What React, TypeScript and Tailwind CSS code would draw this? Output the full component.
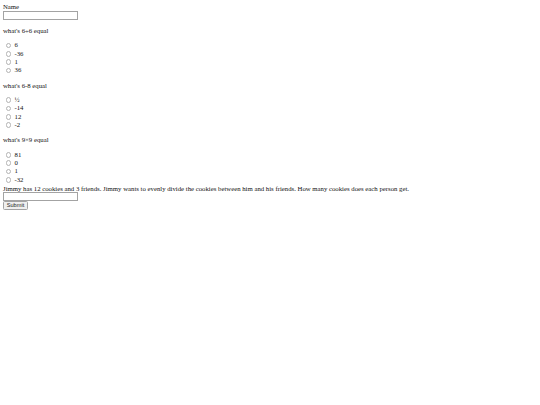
import React from 'react';

const questions = [
  { q: "what's 6÷6 equal", name: 'q1', options: ['6', '-36', '1', '36'] },
  { q: "what's 6-8 equal", name: 'q2', options: ['½', '-14', '12', '-2'] },
  { q: "what's 9×9 equal", name: 'q3', options: ['81', '0', '1', '-32'] },
];

export default function App() {
  return (
    <form className="min-h-[405px] bg-white px-[3px] pt-[2px] font-['Liberation_Serif',serif] text-[6.75px] leading-[8px] text-[#111] antialiased [transform:translateZ(0)]">
      <label htmlFor="name" className="block h-[9px] leading-[9px]">Name</label>
      <input
        id="name"
        type="text"
        className="block h-[9px] w-[75px] border border-[#a3a3a3] bg-white outline-none"
      />

      {questions.map((item) => (
        <div key={item.name}>
          <p className="mt-[6px] h-[9px] leading-[9px]">{item.q}</p>
          <div className="mt-[6.33px]">
            {item.options.map((opt) => (
              <label key={opt} className="flex h-[8.33px] items-center">
                <input
                  type="radio"
                  name={item.name}
                  className="ml-[2.5px] mr-[3.5px] h-[5.5px] w-[5.5px] appearance-none rounded-full border border-[#b3b3b3] bg-white"
                />
                <span className="leading-[8px]">{opt}</span>
              </label>
            ))}
          </div>
        </div>
      ))}

      <p className="h-[8px] leading-[9px]">
        Jimmy has 12 cookies and 3 friends. Jimmy wants to evenly divide the cookies between him and his friends. How many cookies does each person get.
      </p>
      <input
        type="text"
        className="block h-[9px] w-[75px] border border-[#a3a3a3] bg-white outline-none"
      />
      <button
        type="button"
        className="block h-[9px] w-[25px] rounded-[1.5px] border border-[#a3a3a3] bg-[#efefef] font-['Liberation_Sans',sans-serif] text-[5.6px] leading-[6px] text-[#222]"
      >
        Submit
      </button>
    </form>
  );
}
